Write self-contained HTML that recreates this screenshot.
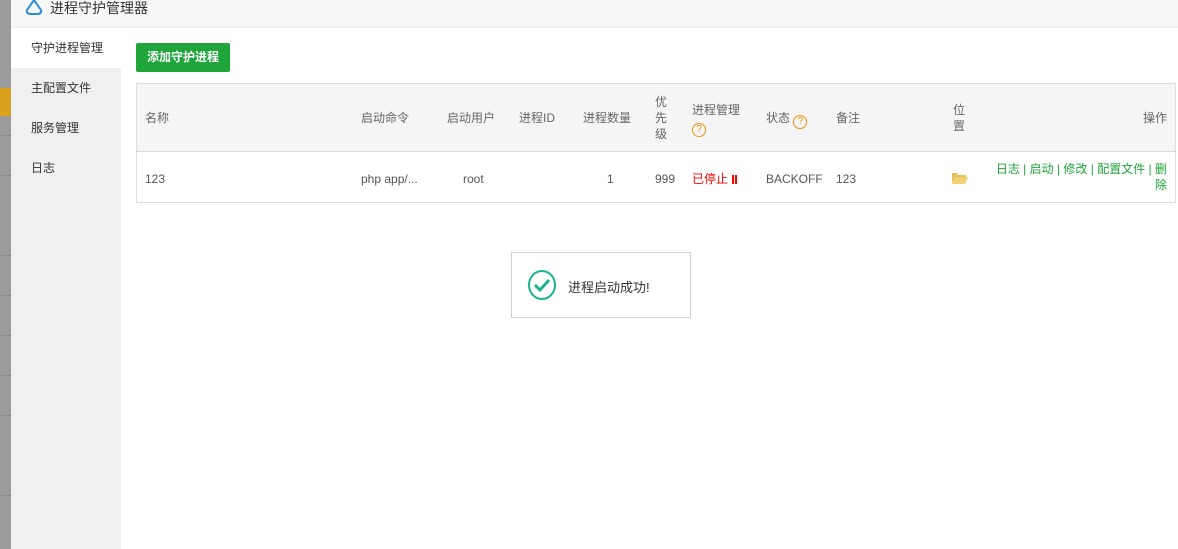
<!DOCTYPE html>
<html><head><meta charset="utf-8"><style>
*{margin:0;padding:0;box-sizing:border-box}
body{width:1178px;height:549px;overflow:hidden;position:relative;background:#fff;font-family:"Liberation Sans","Noto Sans CJK SC",sans-serif;font-size:12px;color:#555}
.strip{position:absolute;left:0;top:0;width:11px;height:549px;background:#9b9b9b}
.strip i{position:absolute;left:0;width:11px;height:1px;background:#8a8a8a}
.hdr{position:absolute;left:11px;top:0;width:1167px;height:28px;background:#f7f7f7;border-bottom:1px solid #eee}
.hdr span{position:absolute;left:39px;top:0;font-size:14px;color:#333;line-height:16px}
.side{position:absolute;left:11px;top:28px;width:110px;height:521px;background:#f0f0f0}
.side div{height:40px;line-height:40px;padding-left:20px;color:#333}
.side div.a{background:#fff}
.btn{position:absolute;left:136px;top:43px;width:94px;height:29px;background:#20a53a;color:#fff;border-radius:2px;text-align:center;line-height:29px;font-weight:bold}
.tbl{position:absolute;left:136px;top:83px;width:1040px;height:120px;border:1px solid #ddd}
.th{position:absolute;left:0;top:0;width:1038px;height:68px;background:#f5f5f5;border-bottom:1px solid #ddd}
.t{position:absolute;line-height:16px;color:#666}
.r{color:#555}
.q{display:inline-block;width:14px;height:14px;border:1.5px solid #f0900f;border-radius:50%;color:#f0900f;font-size:10px;line-height:11px;text-align:center;vertical-align:-2px}
.g{color:#20a53a}
.toast{position:absolute;left:511px;top:252px;width:180px;height:66px;border:1px solid #d0d0d0;background:#fff}
.p{display:inline-block;width:2px;height:9px;background:#f00;margin-left:1px;vertical-align:-1px}
</style></head><body>
<div class="strip"><i style="top:135px"></i><i style="top:175px"></i><i style="top:255px"></i><i style="top:295px"></i><i style="top:335px"></i><i style="top:375px"></i><i style="top:415px"></i><i style="top:495px"></i></div>
<div style="position:absolute;left:0;top:88px;width:11px;height:28px;background:#d9a21c"></div>
<div class="hdr"><svg style="position:absolute;left:12px;top:-2px" width="22" height="18" viewBox="0 0 22 18"><path d="M11 2 L4 12 Q3 16 8 16 L14 16 Q19 16 18 12 Z" fill="none" stroke="#2d8fd5" stroke-width="2"/></svg><span>进程守护管理器</span></div>
<div class="side"><div class="a">守护进程管理</div><div>主配置文件</div><div>服务管理</div><div>日志</div></div>
<div class="btn">添加守护进程</div>
<div class="tbl"><div class="th"></div>
<div class="t" style="left:8px;top:26px">名称</div>
<div class="t" style="left:224px;top:26px">启动命令</div>
<div class="t" style="left:310px;top:26px">启动用户</div>
<div class="t" style="left:382px;top:26px">进程ID</div>
<div class="t" style="left:446px;top:26px">进程数量</div>
<div class="t" style="left:518px;top:10px;width:14px">优先级</div>
<div class="t" style="left:555px;top:18px">进程管理<br><span class="q">?</span></div>
<div class="t" style="left:629px;top:26px">状态 <span class="q">?</span></div>
<div class="t" style="left:699px;top:26px">备注</div>
<div class="t" style="left:816px;top:18px;width:14px">位置</div>
<div class="t" style="right:8px;top:26px">操作</div>
<div class="t r" style="left:8px;top:87px">123</div>
<div class="t r" style="left:224px;top:87px">php app/...</div>
<div class="t r" style="left:326px;top:87px">root</div>
<div class="t r" style="left:470px;top:87px">1</div>
<div class="t r" style="left:518px;top:87px">999</div>
<div class="t" style="left:555px;top:87px;color:#f00">已停止 <i class="p"></i><i class="p"></i></div>
<div class="t r" style="left:629px;top:87px">BACKOFF</div>
<div class="t r" style="left:699px;top:87px">123</div>
<svg style="position:absolute;left:815px;top:88px" width="16" height="12" viewBox="0 0 16 12"><path d="M0 1h5l1 2h8v2H3L0 11z" fill="#e5c35a"/><path d="M3 5h13l-3 7H0z" fill="#f0d070"/></svg>
<div class="t g" style="right:8px;top:77px;text-align:right">日志 | 启动 | 修改 | 配置文件 | 删<br>除</div>
</div>
<div class="toast"><svg style="position:absolute;left:15px;top:16px" width="30" height="32" viewBox="0 0 30 32"><ellipse cx="15" cy="16" rx="13" ry="14" fill="none" stroke="#1bb394" stroke-width="2"/><path d="M8 16l5 5 9-10" fill="none" stroke="#1bb394" stroke-width="3"/></svg><span style="position:absolute;left:56px;top:24px;font-size:13px;color:#333">进程启动成功!</span></div>
</body></html>
